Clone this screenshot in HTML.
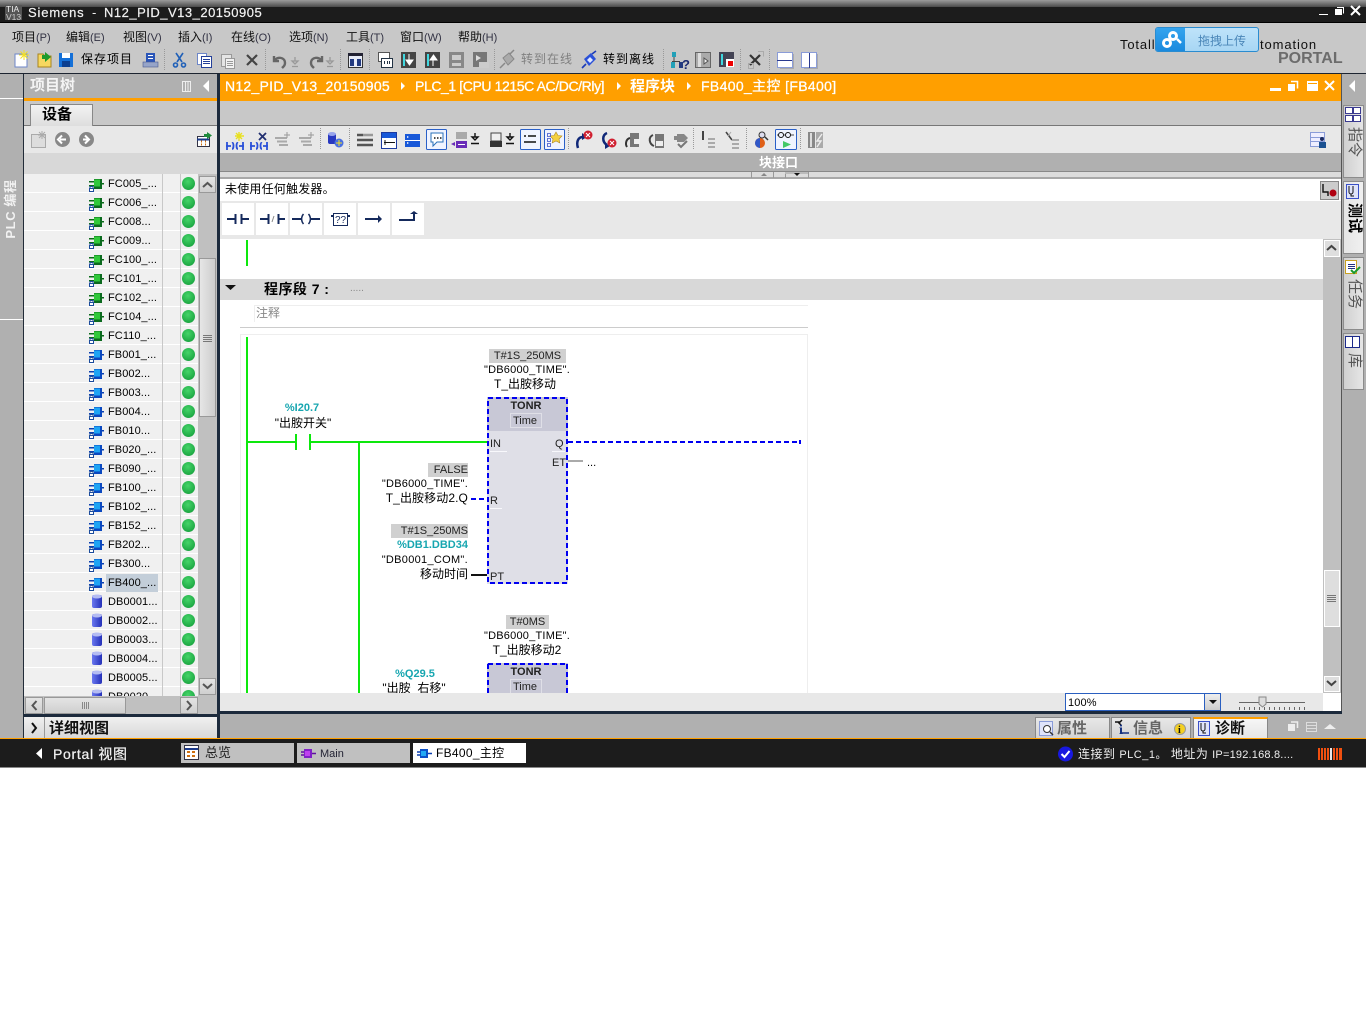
<!DOCTYPE html>
<html lang="zh"><head><meta charset="utf-8"><title>Siemens - N12_PID_V13_20150905</title>
<style>
html,body{margin:0;padding:0;background:#fff}
body{width:1366px;height:1016px;position:relative;overflow:hidden;font:11px "Liberation Sans","WenQuanYi Zen Hei","Noto Sans CJK SC",sans-serif;color:#000}
.b{position:absolute}
.t{position:absolute;white-space:nowrap;line-height:14px}
.m{font-size:12px;color:#111}.m i{font-style:normal;color:#334;font-size:11px}
.rt{text-align:right;right:898px}
.c{text-align:center}
.r{position:absolute;left:24px;width:174px;height:18px;background:#f0f0f0;border-bottom:1px solid #fff}
.r svg{position:absolute;left:64px;top:2px}
.r span{position:absolute;left:84px;top:3px;line-height:14px;white-space:nowrap;letter-spacing:.08px}
.r u{position:absolute;left:138px;top:0;width:1px;height:19px;background:#c8c8c8}
.r s{position:absolute;left:156px;top:0;width:1px;height:19px;background:#c8c8c8}
.r b{position:absolute;left:158px;top:3px;width:13px;height:13px;border-radius:50%;background:radial-gradient(circle at 45% 35%,#45d468,#1faa45 70%,#178a38)}
.sb{position:absolute;box-sizing:border-box;border:1px solid #fff;outline:1px solid #999;outline-offset:-1px;background:linear-gradient(#e4e4e4,#cfcfcf)}
.btn{position:absolute;background:#fff;width:32px;height:32px;top:203px}
.vt{position:absolute;box-sizing:border-box;left:1343px;width:21px;border:1px solid #8c8c8c;background:linear-gradient(90deg,#d0d0d0,#e6e6e6)}
.vt span{position:absolute;left:2px;writing-mode:vertical-rl;text-orientation:sideways;font-size:15px;line-height:16px;color:#555;white-space:nowrap}
.tab{position:absolute;top:743px;width:113px;height:20px;background:#c0c0c0}
.lt{position:absolute;top:717px;height:21px;box-sizing:border-box;border:1px solid #888;border-bottom:0;background:linear-gradient(#e8e8e8,#d4d4d4)}
</style></head><body>

<!-- Backgrounds -->
<div class="b" style="left:0;top:0;width:1366px;height:7px;background:linear-gradient(#9c9c9c,#4a4a4a)"></div>
<div class="b" style="left:0;top:7px;width:1366px;height:15px;background:#1c1c1c"></div>
<div class="b" style="left:0;top:22px;width:1366px;height:1px;background:#000"></div>
<div class="b" style="left:0;top:23px;width:1366px;height:50px;background:#c8c8c8"></div>
<div class="b" style="left:0;top:73px;width:1366px;height:1px;background:#1c2430"></div>

<!-- Left vertical strip -->
<div class="b" style="left:0;top:74px;width:23px;height:665px;background:#b0b0b0"></div>
<div class="b" style="left:0;top:98px;width:23px;height:1px;background:#fff"></div>
<div class="b" style="left:0;top:319px;width:23px;height:1px;background:#fff"></div>
<div class="b" style="left:23px;top:74px;width:1px;height:665px;background:#222c38"></div>
<div class="t" style="left:-24px;top:202px;width:70px;text-align:center;transform:rotate(-90deg);color:#f2f2f2;font-weight:bold;font-size:13px;letter-spacing:.6px">PLC 编程</div>

<!-- Project tree -->
<div class="b" style="left:24px;top:74px;width:193px;height:24px;background:#b0b0b0"></div>
<div class="b" style="left:24px;top:98px;width:193px;height:3px;background:#ff9f00"></div>
<div class="t" style="left:30px;top:78px;font-size:15px;line-height:16px;color:#f4f4f4;font-weight:bold">项目树</div>
<div class="b" style="left:24px;top:101px;width:193px;height:24px;background:#c8c8c8"></div>
<div class="b" style="left:24px;top:125px;width:193px;height:1px;background:#777"></div>
<div class="b" style="left:30px;top:104px;width:63px;height:22px;box-sizing:border-box;border:1px solid #888;border-bottom:0;background:linear-gradient(#f2f2f2,#dedede)"></div>
<div class="t" style="left:42px;top:106px;font-size:15px;line-height:17px;font-weight:bold">设备</div>
<div class="b" style="left:24px;top:126px;width:193px;height:27px;background:#e8e8e8"></div>
<div class="b" style="left:24px;top:153px;width:193px;height:21px;background:#d8d8d8"></div>
<div class="b" style="left:198px;top:174px;width:19px;height:522px;background:#c0c0c0"></div>

<svg width="0" height="0" style="position:absolute">
<defs>
<g id="fc"><path d="M1 5h5v1.500H1zM1 9h5v1.500H1zM13 7h3v1.500h-3z" fill="#0a6a18"/><rect x="6" y="3" width="8" height="10" fill="#0b6a1e"/><rect x="6" y="3.500" width="6" height="7" fill="#30c83a"/><rect x="1" y="12" width="5" height="4" fill="#1c4c9c"/><rect x="2" y="13" width="3" height="2" fill="#fff"/><path d="M2 12v-1.500h3V12" fill="none" stroke="#1c4c9c"/></g>
<g id="fb"><path d="M1 5h5v1.500H1zM1 9h5v1.500H1zM13 7h3v1.500h-3z" fill="#0a3fb0"/><rect x="6" y="3" width="8" height="10" fill="#0a48c0"/><rect x="6" y="3.500" width="6" height="7" fill="#1ea4f4"/><rect x="1" y="12" width="5" height="4" fill="#1c4c9c"/><rect x="2" y="13" width="3" height="2" fill="#fff"/><path d="M2 12v-1.500h3V12" fill="none" stroke="#1c4c9c"/></g>
<linearGradient id="dbg" x1="0" x2="1" y1="0" y2="0"><stop offset="0" stop-color="#6a78f0"/><stop offset="1" stop-color="#2430b8"/></linearGradient>
<g id="db"><rect x="4" y="1" width="10" height="13" rx="2" fill="url(#dbg)"/><ellipse cx="9" cy="2.500" rx="5" ry="2" fill="#b4bcf2"/></g>
</defs></svg>

<div class="r" style="top:174px"><svg width="18" height="16"><use href="#fc"/></svg><span>FC005_...</span><u></u><s></s><b></b></div>
<div class="r" style="top:193px"><svg width="18" height="16"><use href="#fc"/></svg><span>FC006_...</span><u></u><s></s><b></b></div>
<div class="r" style="top:212px"><svg width="18" height="16"><use href="#fc"/></svg><span>FC008...</span><u></u><s></s><b></b></div>
<div class="r" style="top:231px"><svg width="18" height="16"><use href="#fc"/></svg><span>FC009...</span><u></u><s></s><b></b></div>
<div class="r" style="top:250px"><svg width="18" height="16"><use href="#fc"/></svg><span>FC100_...</span><u></u><s></s><b></b></div>
<div class="r" style="top:269px"><svg width="18" height="16"><use href="#fc"/></svg><span>FC101_...</span><u></u><s></s><b></b></div>
<div class="r" style="top:288px"><svg width="18" height="16"><use href="#fc"/></svg><span>FC102_...</span><u></u><s></s><b></b></div>
<div class="r" style="top:307px"><svg width="18" height="16"><use href="#fc"/></svg><span>FC104_...</span><u></u><s></s><b></b></div>
<div class="r" style="top:326px"><svg width="18" height="16"><use href="#fc"/></svg><span>FC110_...</span><u></u><s></s><b></b></div>
<div class="r" style="top:345px"><svg width="18" height="16"><use href="#fb"/></svg><span>FB001_...</span><u></u><s></s><b></b></div>
<div class="r" style="top:364px"><svg width="18" height="16"><use href="#fb"/></svg><span>FB002...</span><u></u><s></s><b></b></div>
<div class="r" style="top:383px"><svg width="18" height="16"><use href="#fb"/></svg><span>FB003...</span><u></u><s></s><b></b></div>
<div class="r" style="top:402px"><svg width="18" height="16"><use href="#fb"/></svg><span>FB004...</span><u></u><s></s><b></b></div>
<div class="r" style="top:421px"><svg width="18" height="16"><use href="#fb"/></svg><span>FB010...</span><u></u><s></s><b></b></div>
<div class="r" style="top:440px"><svg width="18" height="16"><use href="#fb"/></svg><span>FB020_...</span><u></u><s></s><b></b></div>
<div class="r" style="top:459px"><svg width="18" height="16"><use href="#fb"/></svg><span>FB090_...</span><u></u><s></s><b></b></div>
<div class="r" style="top:478px"><svg width="18" height="16"><use href="#fb"/></svg><span>FB100_...</span><u></u><s></s><b></b></div>
<div class="r" style="top:497px"><svg width="18" height="16"><use href="#fb"/></svg><span>FB102_...</span><u></u><s></s><b></b></div>
<div class="r" style="top:516px"><svg width="18" height="16"><use href="#fb"/></svg><span>FB152_...</span><u></u><s></s><b></b></div>
<div class="r" style="top:535px"><svg width="18" height="16"><use href="#fb"/></svg><span>FB202...</span><u></u><s></s><b></b></div>
<div class="r" style="top:554px"><svg width="18" height="16"><use href="#fb"/></svg><span>FB300...</span><u></u><s></s><b></b></div>
<div class="r" style="top:573px"><div class="b" style="left:82px;top:1px;width:52px;height:18px;background:#c3ced9"></div><svg width="18" height="16"><use href="#fb"/></svg><span>FB400_...</span><u></u><s></s><b></b></div>
<div class="r" style="top:592px"><svg width="18" height="16"><use href="#db"/></svg><span>DB0001...</span><u></u><s></s><b></b></div>
<div class="r" style="top:611px"><svg width="18" height="16"><use href="#db"/></svg><span>DB0002...</span><u></u><s></s><b></b></div>
<div class="r" style="top:630px"><svg width="18" height="16"><use href="#db"/></svg><span>DB0003...</span><u></u><s></s><b></b></div>
<div class="r" style="top:649px"><svg width="18" height="16"><use href="#db"/></svg><span>DB0004...</span><u></u><s></s><b></b></div>
<div class="r" style="top:668px"><svg width="18" height="16"><use href="#db"/></svg><span>DB0005...</span><u></u><s></s><b></b></div>
<div class="r" style="top:687px;height:9px;overflow:hidden;border:0"><svg width="18" height="16"><use href="#db"/></svg><span>DB0020...</span><u></u><s></s><b></b></div>

<!-- Tree scrollbars -->
<div class="sb" style="left:199px;top:176px;width:17px;height:17px"></div>
<div class="sb" style="left:199px;top:258px;width:17px;height:159px;background:linear-gradient(90deg,#e6e6e6,#cdcdcd)"></div>
<div class="sb" style="left:199px;top:678px;width:17px;height:17px"></div>
<div class="b" style="left:24px;top:696px;width:193px;height:18px;background:#c0c0c0"></div>
<div class="sb" style="left:25px;top:697px;width:18px;height:17px"></div>
<div class="sb" style="left:44px;top:697px;width:82px;height:17px"></div>
<div class="sb" style="left:180px;top:697px;width:18px;height:17px"></div>
<div class="b" style="left:24px;top:714px;width:193px;height:3px;background:#1c2a3c"></div>
<div class="b" style="left:24px;top:717px;width:193px;height:21px;background:linear-gradient(#f0f0f0,#d8d8d8)"></div>
<div class="b" style="left:44px;top:717px;width:1px;height:21px;background:#999"></div>
<div class="t" style="left:49px;top:721px;font-size:15px;line-height:16px;font-weight:bold;color:#111">详细视图</div>
<div class="b" style="left:217px;top:74px;width:3px;height:665px;background:#1c2a3c"></div>

<!-- Editor -->
<div class="b" style="left:220px;top:74px;width:1122px;height:27px;background:#ff9f00"></div>
<div class="t" style="left:225px;top:78px;font-size:14px;line-height:17px;color:#fff;letter-spacing:.27px;-webkit-text-stroke:.3px #fff">N12_PID_V13_20150905</div>
<div class="t" style="left:415px;top:78px;font-size:14px;line-height:17px;color:#fff;letter-spacing:-.4px;-webkit-text-stroke:.3px #fff">PLC_1 [CPU 1215C AC/DC/Rly]</div>
<div class="t" style="left:630px;top:78px;font-size:15px;line-height:17px;color:#fff;font-weight:bold">程序块</div>
<div class="t" style="left:701px;top:78px;font-size:14px;line-height:17px;color:#fff;letter-spacing:.35px;-webkit-text-stroke:.3px #fff">FB400_主控 [FB400]</div>
<div class="b" style="left:220px;top:101px;width:1122px;height:24px;background:#c8c8c8"></div>
<div class="b" style="left:220px;top:125px;width:1122px;height:1px;background:#777"></div>
<div class="b" style="left:220px;top:126px;width:1122px;height:27px;background:#e8e8e8"></div>
<div class="b" style="left:220px;top:153px;width:1122px;height:18px;background:#b0b0b0"></div>
<div class="b" style="left:220px;top:171px;width:1122px;height:1px;background:#888"></div>
<div class="b" style="left:220px;top:172px;width:1122px;height:5px;background:#dcdcdc"></div>
<div class="b" style="left:220px;top:177px;width:1122px;height:2px;background:#a8a8a8"></div>
<div class="b" style="left:220px;top:179px;width:1122px;height:22px;background:#fff"></div>
<div class="b" style="left:220px;top:201px;width:1122px;height:38px;background:#e8e8e8"></div>
<div class="b" style="left:220px;top:239px;width:1103px;height:454px;background:#fff"></div>
<div class="b" style="left:1323px;top:239px;width:19px;height:454px;background:#c0c0c0"></div>
<div class="t" style="left:759px;top:155px;font-size:13px;line-height:15px;font-weight:bold;color:#fff">块接口</div>
<div class="t" style="left:225px;top:182px;font-size:12px;line-height:14px;letter-spacing:.2px">未使用任何触发器。</div>

<div class="btn" style="left:222px"></div><div class="btn" style="left:256px"></div><div class="btn" style="left:290px"></div>
<div class="btn" style="left:324px"></div><div class="btn" style="left:358px"></div><div class="btn" style="left:392px"></div>

<!-- Network header -->
<div class="b" style="left:220px;top:279px;width:1103px;height:21px;background:#d8d8d8"></div>
<div class="t" style="left:264px;top:281px;font-size:14px;line-height:16px;font-weight:bold;letter-spacing:.45px">程序段 7 :</div>
<div class="t" style="left:350px;top:283px;font-size:10px;line-height:12px;color:#888">.....</div>
<div class="b" style="left:254px;top:305px;width:554px;height:1px;background:#eee"></div>
<div class="b" style="left:254px;top:305px;width:1px;height:17px;background:#eee"></div>
<div class="t" style="left:256px;top:306px;font-size:12px;color:#888">注释</div>
<div class="b" style="left:240px;top:327px;width:568px;height:1px;background:#ccc"></div>
<div class="b" style="left:240px;top:334px;width:568px;height:1px;background:#eee"></div>
<div class="b" style="left:240px;top:334px;width:1px;height:359px;background:#eee"></div>
<div class="b" style="left:807px;top:334px;width:1px;height:359px;background:#eee"></div>

<!-- Ladder blocks -->
<div class="b" style="left:487px;top:397px;width:81px;height:34px;background:#c8c8d6"></div>
<div class="b" style="left:487px;top:431px;width:81px;height:153px;background:#dfdfe7"></div>
<div class="b" style="left:510px;top:413px;width:32px;height:15px;box-sizing:border-box;border:1px solid #dfdfe7"></div>
<div class="b" style="left:487px;top:663px;width:81px;height:30px;background:#c8c8d6"></div>
<div class="b" style="left:510px;top:679px;width:32px;height:14px;box-sizing:border-box;border:1px solid #dfdfe7;border-bottom:0"></div>

<!-- Right strip -->
<div class="b" style="left:1342px;top:74px;width:24px;height:665px;background:#b0b0b0"></div>
<div class="b" style="left:1341px;top:74px;width:1px;height:665px;background:#555"></div>
<div class="vt" style="top:105px;height:73px"><span style="top:21px">指令</span></div>
<div class="vt" style="top:181px;height:73px;background:linear-gradient(90deg,#e6e6e6,#f0f0f0)"><span style="top:21px;color:#000;font-weight:bold">测试</span></div>
<div class="vt" style="top:257px;height:73px"><span style="top:21px">任务</span></div>
<div class="vt" style="top:333px;height:57px"><span style="top:19px">库</span></div>

<!-- Bottom of editor -->
<div class="b" style="left:220px;top:693px;width:1103px;height:18px;background:#e8e8e8"></div>
<div class="b" style="left:1065px;top:693px;width:156px;height:18px;box-sizing:border-box;border:1px solid #2a5fc0;background:#fff"></div>
<div class="b" style="left:1204px;top:694px;width:16px;height:16px;background:linear-gradient(#eee,#ccc);border-left:1px solid #2a5fc0;box-sizing:border-box"></div>
<div class="t" style="left:1068px;top:696px;font-size:11px;letter-spacing:.15px">100%</div>
<div class="b" style="left:220px;top:711px;width:1122px;height:3px;background:#1c2a3c"></div>
<div class="b" style="left:220px;top:714px;width:1122px;height:24px;background:#b0b0b0"></div>
<div class="lt" style="left:1035px;width:75px"></div>
<div class="lt" style="left:1111px;width:80px"></div>
<div class="lt" style="left:1193px;width:75px;background:linear-gradient(#f6f6f6,#e6e6e6);border-top:2px solid #ff9f00"></div>
<div class="t" style="left:1057px;top:720px;font-size:15px;line-height:17px;font-weight:bold;color:#666">属性</div>
<div class="t" style="left:1133px;top:720px;font-size:15px;line-height:17px;font-weight:bold;color:#666">信息</div>
<div class="t" style="left:1215px;top:720px;font-size:15px;line-height:17px;font-weight:bold;color:#111">诊断</div>

<!-- Bottom bar -->
<div class="b" style="left:0;top:738px;width:1366px;height:1px;background:#ff9f00"></div>
<div class="b" style="left:0;top:739px;width:1366px;height:28px;background:#1c1c1c"></div>
<div class="b" style="left:0;top:767px;width:1366px;height:1px;background:#888"></div>
<div class="t" style="left:53px;top:746px;font-size:14px;line-height:17px;color:#f0f0f0;letter-spacing:.7px;-webkit-text-stroke:.25px #f0f0f0">Portal 视图</div>
<div class="tab" style="left:181px"></div><div class="tab" style="left:297px"></div><div class="tab" style="left:413px;background:#fff"></div>
<div class="t" style="left:205px;top:745px;font-size:13px;line-height:15px;color:#222">总览</div>
<div class="t" style="left:320px;top:747px;font-size:11px;color:#223">Main</div>
<div class="t" style="left:436px;top:746px;font-size:12px;line-height:15px;letter-spacing:.3px">FB400_主控</div>
<div class="t" style="left:1078px;top:747px;font-size:12px;color:#eee;letter-spacing:.5px">连接到 <span style="font-size:11px">PLC_1。</span> 地址为 <span style="font-size:11px;letter-spacing:.2px">IP=192.168.8....</span></div>

<!-- Title bar & menu -->
<div class="t" style="left:28px;top:5px;font-size:13px;line-height:15px;color:#f2f2f2;letter-spacing:.85px;-webkit-text-stroke:.2px #f2f2f2">Siemens</div>
<div class="t" style="left:92px;top:5px;font-size:13px;line-height:15px;color:#f2f2f2">-</div>
<div class="t" style="left:104px;top:5px;font-size:13px;line-height:15px;color:#f2f2f2;letter-spacing:.5px;-webkit-text-stroke:.2px #f2f2f2">N12_PID_V13_20150905</div>
<div class="t m" style="left:12px;top:30px">项目<i>(P)</i></div>
<div class="t m" style="left:66px;top:30px">编辑<i>(E)</i></div>
<div class="t m" style="left:123px;top:30px">视图<i>(V)</i></div>
<div class="t m" style="left:178px;top:30px">插入<i>(I)</i></div>
<div class="t m" style="left:231px;top:30px">在线<i>(O)</i></div>
<div class="t m" style="left:289px;top:30px">选项<i>(N)</i></div>
<div class="t m" style="left:346px;top:30px">工具<i>(T)</i></div>
<div class="t m" style="left:400px;top:30px">窗口<i>(W)</i></div>
<div class="t m" style="left:458px;top:30px">帮助<i>(H)</i></div>
<div class="t" style="left:81px;top:52px;font-size:12px;letter-spacing:1px">保存项目</div>
<div class="t" style="left:521px;top:52px;font-size:12px;letter-spacing:1px;color:#808080">转到在线</div>
<div class="t" style="left:603px;top:52px;font-size:12px;letter-spacing:1px">转到离线</div>
<div class="t" style="left:1120px;top:37px;font-size:13px;line-height:15px;letter-spacing:.85px;color:#111">Totall</div>
<div class="t" style="left:1260px;top:37px;font-size:13px;line-height:15px;letter-spacing:.9px;color:#111">tomation</div>
<div class="t" style="left:1278px;top:49px;font-size:16px;line-height:19px;font-weight:bold;color:#6c6c6c">PORTAL</div>
<div class="b" style="left:1155px;top:27px;width:104px;height:25px;box-sizing:border-box;border:1px solid #2a8cd0;border-radius:3px;background:linear-gradient(#bfe3fa,#a8d6f4)"></div>
<div class="b" style="left:1156px;top:28px;width:29px;height:23px;border-radius:2px 0 0 2px;background:linear-gradient(#34a4ee,#1a8ade)"></div>
<div class="t" style="left:1198px;top:34px;font-size:12px;color:#4a86b8">拖拽上传</div>

<!-- Ladder text -->
<div class="b" style="left:0;top:1px;width:1366px;height:692px;overflow:hidden">
<div class="t c" style="left:489px;top:348px;width:77px;background:#d0d0d0;font-size:11px;color:#222">T#1S_250MS</div>
<div class="t c" style="left:469px;top:362px;width:116px;font-size:11px;letter-spacing:.22px">"DB6000_TIME".</div>
<div class="t c" style="left:468px;top:376px;width:114px;font-size:12px">T_出胺移动</div>
<div class="t c" style="left:284px;top:400px;width:36px;font-size:11px;font-weight:bold;color:#17a6b0">%I20.7</div>
<div class="t c" style="left:264px;top:415px;width:78px;font-size:12px">"出胺开关"</div>
<div class="t c" style="left:486px;top:398px;width:80px;font-size:11px;font-weight:bold;color:#222">TONR</div>
<div class="t c" style="left:486px;top:413px;width:78px;font-size:11px;color:#222">Time</div>
<div class="t" style="left:490px;top:436px;font-size:11px;color:#222">IN</div>
<div class="t" style="left:555px;top:436px;font-size:11px;color:#222">Q</div>
<div class="t" style="left:552px;top:455px;font-size:11px;color:#222">ET</div>
<div class="t" style="left:587px;top:455px;font-size:11px">...</div>
<div class="t" style="left:490px;top:493px;font-size:11px;color:#222">R</div>
<div class="t" style="left:490px;top:569px;font-size:11px;color:#222">PT</div>
<div class="t" style="left:428px;top:462px;width:40px;background:#d0d0d0;text-align:right;font-size:11px;color:#222">FALSE</div>
<div class="t rt" style="top:476px;font-size:11px;letter-spacing:.22px">"DB6000_TIME".</div>
<div class="t rt" style="top:490px;font-size:12px;letter-spacing:.1px">T_出胺移动2.Q</div>
<div class="t" style="left:391px;top:523px;width:77px;background:#d0d0d0;text-align:right;font-size:11px;color:#222">T#1S_250MS</div>
<div class="t rt" style="top:537px;font-size:11px;font-weight:bold;color:#17a6b0">%DB1.DBD34</div>
<div class="t rt" style="top:552px;font-size:11px;letter-spacing:.3px">"DB0001_COM".</div>
<div class="t rt" style="top:566px;font-size:12px">移动时间</div>
<div class="t c" style="left:506px;top:614px;width:43px;background:#d0d0d0;font-size:11px;color:#222">T#0MS</div>
<div class="t c" style="left:469px;top:628px;width:116px;font-size:11px;letter-spacing:.22px">"DB6000_TIME".</div>
<div class="t c" style="left:470px;top:642px;width:114px;font-size:12px">T_出胺移动2</div>
<div class="t c" style="left:394px;top:666px;width:42px;font-size:11px;font-weight:bold;color:#17a6b0">%Q29.5</div>
<div class="t c" style="left:373px;top:680px;width:82px;font-size:12px">"出胺_右移"</div>
<div class="t c" style="left:486px;top:664px;width:80px;font-size:11px;font-weight:bold;color:#222">TONR</div>
<div class="t c" style="left:486px;top:679px;width:78px;font-size:11px;color:#222">Time</div>
</div>

<!-- Graphics overlay -->
<svg class="b" style="left:0;top:0;pointer-events:none" width="1366" height="768" viewBox="0 0 1366 768" fill="none">
<!-- App logo -->
<rect x="5" y="5" width="17" height="15" fill="#555"/>
<text x="6" y="12" fill="#eee" font-family="Liberation Sans" font-size="8.500">TIA</text>
<text x="6" y="20" fill="#ccc" font-family="Liberation Sans" font-size="8.500">V13</text>
<!-- Window buttons -->
<path d="M1319 14.500h9" stroke="#fff"/><path d="M1337 7.500h6.500v6" stroke="#fff"/><rect x="1335" y="9" width="7" height="6" fill="#fff"/><path d="M1351 6l9 9M1360 6l-9 9" stroke="#fff" stroke-width="2"/>
<!-- Toolbar 1 -->
<g><rect x="15" y="54" width="12" height="13" fill="#fff" stroke="#6d86c8"/><path d="M24 50v10M19 55h10M20.500 51.500l7 7M27.500 51.500l-7 7" stroke="#f4e020"/></g>
<g><path d="M38 54h5l2 2h6v11H38z" fill="#f6d860" stroke="#a88420"/><path d="M45 52l6 5-6 5v-3h-3v-4h3z" fill="#1e9a2c"/></g>
<g><rect x="59" y="53" width="14" height="14" fill="#1470d8"/><rect x="62" y="53" width="8" height="5" fill="#fff"/><rect x="62" y="61" width="8" height="6" fill="#0c3f90"/></g>
<g><rect x="146" y="53" width="9" height="9" fill="#2a55b8"/><rect x="148" y="55" width="5" height="1" fill="#fff"/><rect x="148" y="58" width="5" height="1" fill="#fff"/><rect x="143" y="62" width="15" height="5" fill="#96a4c8" stroke="#4a5a90" stroke-width=".6"/></g>
<path d="M164.500 49v21M265.500 49v21M340.500 49v21M369.500 49v21M494.500 49v21M663.500 49v21M740.500 49v21M769.500 49v21" stroke="#999" stroke-dasharray="1 1"/>
<g stroke="#2060b8" stroke-width="1.600"><path d="M176 53l6 9M183 53l-6 9"/><circle cx="175.500" cy="65" r="2"/><circle cx="183.500" cy="65" r="2"/></g>
<g><rect x="197.500" y="53.500" width="9" height="11" fill="#fff" stroke="#6d86c8"/><rect x="201.500" y="56.500" width="10" height="11" fill="#fff" stroke="#233f9a"/><path d="M203 59.500h7M203 61.500h7M203 63.500h7" stroke="#233f9a"/></g>
<g stroke="#999"><rect x="221.500" y="54.500" width="10" height="12" fill="#e4e4e4"/><rect x="225.500" y="58.500" width="9" height="10" fill="#f2f2f2"/><path d="M227 61.500h6M227 63.500h6M227 65.500h6"/></g>
<path d="M247 55l10 10M257 55l-10 10" stroke="#444" stroke-width="2.200"/>
<path d="M274 56v5h5M274 61c3-5 11-4 11 2 0 3-2 4-3 5" stroke="#666" stroke-width="2.400"/><path d="M295 57v4M292 61h6l-3 3zM292 66.500h6" stroke="#999" stroke-width="1.300"/>
<path d="M322 56v5h-5M322 61c-3-5-11-4-11 2 0 3 2 4 3 5" stroke="#666" stroke-width="2.400"/><path d="M330 57v4M327 61h6l-3 3zM327 66.500h6" stroke="#999" stroke-width="1.300"/>
<g><rect x="348.500" y="53.500" width="14" height="14" fill="#e8ecf8" stroke="#333"/><rect x="348" y="53" width="15" height="3" fill="#223"/><rect x="350" y="59" width="4" height="7" fill="#223a80"/><rect x="357" y="59" width="4" height="7" fill="#223a80"/></g>
<g><rect x="378.500" y="52.500" width="11" height="9" fill="#fff" stroke="#555"/><rect x="381.500" y="58.500" width="11" height="9" fill="#fff" stroke="#234"/><path d="M384.500 61v3M387.500 61v3M389.500 61v3" stroke="#234"/></g>
<g><rect x="401" y="52" width="15" height="16" fill="#444"/><rect x="403" y="54" width="2" height="12" fill="#40d8e0"/><path d="M409 54v7M406 60h7l-3.500 5z" fill="#fff" stroke="#fff"/></g>
<g><rect x="425" y="52" width="15" height="16" fill="#444"/><rect x="427" y="54" width="2" height="12" fill="#40d8e0"/><path d="M433 66v-7M430 60h7l-3.500-5z" fill="#fff" stroke="#fff"/></g>
<g><rect x="449" y="52" width="15" height="16" fill="#888"/><rect x="452" y="55" width="9" height="5" fill="#ccc"/><rect x="452" y="63" width="9" height="3" fill="#ccc"/></g>
<g><rect x="473" y="52" width="14" height="15" fill="#777"/><path d="M476 55l5 3-5 3z" fill="#ddd"/><rect x="479" y="62" width="10" height="6" fill="#ccc"/></g>
<g stroke="#888"><path d="M500 68l5-5M509 55l5-5" stroke-width="1.500"/><path d="M503 58l6-5 5 6-6 6z" fill="#aaa"/></g>
<g><path d="M582 68l4-4M592 54l4-3" stroke="#1a3ab8" stroke-width="1.600"/><path d="M584 59l7-6 5 6-7 7z" fill="#2a50d8"/><path d="M587 60l3-3 3 3-3 3z" fill="#dfe8ff"/></g>
<g><rect x="672" y="52" width="4" height="5" fill="#22a0b8"/><path d="M674 57v4M672 61.500h8" stroke="#444"/><rect x="671" y="62" width="4" height="6" fill="#22a0b8"/><rect x="679" y="62" width="4" height="6" fill="#223a80"/></g>
<text x="682" y="69" fill="#1a2a70" font-family="Liberation Sans" font-weight="bold" font-size="13">?</text>
<g><rect x="695.500" y="52.500" width="15" height="15" fill="#aaa" stroke="#666"/><rect x="698" y="53" width="3" height="14" fill="#ddd"/><path d="M704 58l4 3-4 3z" fill="#eee" stroke="#555"/></g>
<g><rect x="719" y="52" width="15" height="15" fill="#445"/><rect x="721" y="54" width="2" height="11" fill="#40d8e0"/><rect x="726" y="59" width="8" height="8" fill="#fff"/><rect x="728" y="61" width="5" height="5" fill="#e00"/></g>
<g><path d="M750 55l10 10M760 55l-10 10" stroke="#333" stroke-width="2.200"/><path d="M758 51.500h5.500v5" stroke="#aaa"/><rect x="748.500" y="63.500" width="5" height="5" stroke="#aaa"/></g>
<g><rect x="777.500" y="52.500" width="15" height="15" fill="#fff" stroke="#8a9cd8"/><path d="M777 60.500h15" stroke="#2a3a90"/><path d="M793.500 54v14.500H780" stroke="#aaa"/></g>
<g><rect x="801.500" y="52.500" width="15" height="15" fill="#fff" stroke="#8a9cd8"/><path d="M809.500 53v15" stroke="#2a3a90"/><path d="M817.500 54v14.500H804" stroke="#aaa"/></g>
<!-- Orange bar glyphs -->
<path d="M182.500 81.500h8v10h-8zM185.500 81v10M188 81v10" stroke="#eee"/><path d="M209 80v12l-6-6z" fill="#fff"/>
<path d="M401 82l4 4-4 4zM617 82l4 4-4 4zM687 82l4 4-4 4z" fill="#fff"/>
<path d="M1270 89.500h11" stroke="#fff" stroke-width="3"/>
<rect x="1288" y="84" width="7" height="7" fill="#fff"/><path d="M1291 81.500h6.500v7" stroke="#fff" stroke-width="1.500"/>
<rect x="1307" y="81" width="11" height="10" fill="#fff"/><rect x="1308" y="83" width="9" height="1" fill="#ff9f00"/>
<path d="M1325 81l9 9M1334 81l-9 9" stroke="#fff" stroke-width="2"/>
<!-- Toolbar 2 -->
<g stroke="#2a50d8" stroke-width="1.800"><path d="M227 142v8M226 146h5M243 142v8M244 146h-5M232 143c2-1 2 6 0 6M238 143c-2-1-2 6 0 6"/><path d="M251 142v8M250 146h5M267 142v8M268 146h-5M256 143c2-1 2 6 0 6M262 143c-2-1-2 6 0 6"/></g>
<path d="M239 132v9M235 136h9M236 133l6 6M242 133l-6 6" stroke="#e8e020" stroke-width="1.400"/>
<path d="M259 133l7 7M266 133l-7 7" stroke="#223070" stroke-width="1.800"/>
<g stroke="#aaa" stroke-width="2"><path d="M275 138h12M277 141.500h10M279 145h9M299 138h12M301 141.500h10M303 145h9"/></g><path d="M287 132v6M284 135h6M311 132v6M308 135h6" stroke="#999"/>
<path d="M320.500 128v22M349.500 128v22M568.500 128v22M693.500 128v22M746.500 128v22M800.500 128v22" stroke="#999" stroke-dasharray="1 1"/>
<g><rect x="328" y="133" width="8" height="11" rx="2" fill="#2838c0"/><ellipse cx="332" cy="134" rx="4" ry="2" fill="#98a4ec"/><circle cx="339" cy="143" r="4.500" fill="#4a70e0"/><path d="M339 140v6M336 143h6" stroke="#f4e020"/></g>
<g stroke="#555" stroke-width="2.500"><path d="M357 135h6M357 140h16M357 145h16"/></g><path d="M363 135h10" stroke="#999" stroke-width="2.500"/>
<g><rect x="381.500" y="132.500" width="15" height="16" fill="#fff" stroke="#1c3aa0"/><rect x="382" y="133" width="14" height="5" fill="#1858d8"/><path d="M384 142.500h11M385 140v5" stroke="#111"/></g>
<g><rect x="405" y="134" width="15" height="13" fill="#1858d8"/><path d="M405 140.500h15" stroke="#fff"/><path d="M407 136l2 1-2 1zM407 142l2 1-2 1z" fill="#fff"/></g>
<rect x="426.500" y="129.500" width="20" height="20" rx="1" fill="#f0f4ff" stroke="#2a60c8"/>
<path d="M431 133h12v9h-6l-4 4v-4h-2z" fill="#fff" stroke="#2a70b8"/><path d="M434 138h1.500M437 138h1.500M440 138h1.500" stroke="#111" stroke-width="1.400"/>
<g><rect x="456" y="132" width="11" height="7" fill="#aaa"/><rect x="456" y="141" width="11" height="7" fill="#6a2cb8"/><path d="M451 144l4-2v4z" fill="#6a2cb8"/><path d="M458 144.500h7" stroke="#fff"/><path d="M475 133v4M472 137h6l-3 3zM471 143.500h8" stroke="#111" stroke-width="1.400"/></g>
<g><path d="M491 133h10v8h-10z" fill="#eee" stroke="#444"/><rect x="490" y="141" width="12" height="6" fill="#333"/><path d="M510 133v4M507 137h6l-3 3zM506 143.500h8" stroke="#111" stroke-width="1.400"/></g>
<rect x="520.500" y="129.500" width="20" height="20" rx="1" fill="#f0f4ff" stroke="#2a60c8"/>
<path d="M524 136h2M524 142h2M528 136h8M526 142h10" stroke="#111" stroke-width="1.500"/>
<rect x="544.500" y="129.500" width="20" height="20" rx="1" fill="#f0f4ff" stroke="#2a60c8"/>
<path d="M556 132l2 3.500 4 .500-3 3 .8 4-3.800-2-3.800 2 .8-4-3-3 4-.500z" fill="#f4d040" stroke="#b08820" stroke-width=".6"/><path d="M547.500 133.500h3v3h-3zM547.500 138.500h3v3h-3zM547.500 143.500h3v3h-3z" stroke="#3a50c8" stroke-width=".8"/>
<g><path d="M578 148c-2-6 0-11 5-11" stroke="#102878" stroke-width="2.500"/><path d="M582 133l5 4-5 3z" fill="#102878"/><circle cx="588" cy="135" r="4.500" fill="#d02030"/><path d="M586 133l4 4M590 133l-4 4" stroke="#fff"/></g>
<g><path d="M607 133c-5 2-5 9 0 12" stroke="#102878" stroke-width="2.500"/><path d="M605 143l5 3-5 3z" fill="#102878"/><circle cx="612" cy="143" r="4.500" fill="#d02030"/><path d="M610 141l4 4M614 141l-4 4" stroke="#fff"/></g>
<g><rect x="630" y="133" width="9" height="14" fill="#777"/><rect x="634" y="139" width="6" height="5" fill="#eee"/><path d="M627 147c-2-3-1-8 3-9" stroke="#333" stroke-width="2"/></g>
<g><rect x="655" y="134" width="9" height="14" fill="#777"/><rect x="656" y="141" width="7" height="5" fill="#eee"/><path d="M654 146c-5-2-6-9-1-11" stroke="#444" stroke-width="2"/></g>
<g><path d="M674 136h3v-2h7l4 4-4 4h-7v-2h-3z" fill="#888"/><path d="M678 144l3 3 6-6" stroke="#777" stroke-width="2"/></g>
<g><rect x="702" y="131" width="2" height="9" fill="#444"/><path d="M708 139h7M708 143h7M708 147h7" stroke="#aaa" stroke-width="2"/></g>
<g><path d="M726 132l6 8" stroke="#444" stroke-width="1.600"/><path d="M731 132l-3 4" stroke="#aaa"/><path d="M732 140h7M732 144h7M732 148h7" stroke="#aaa" stroke-width="2"/></g>
<g><circle cx="760" cy="143" r="5" fill="#e06018"/><path d="M760 138a5 5 0 000 10z" fill="#3058c8"/><circle cx="762" cy="135" r="3" fill="#dde" stroke="#333"/><path d="M765 137l3 3" stroke="#333" stroke-width="1.500"/></g>
<rect x="775.500" y="129.500" width="21" height="20" rx="1" fill="#f0f4ff" stroke="#2a60c8"/>
<circle cx="781" cy="135" r="2.500" stroke="#111"/><circle cx="788" cy="135" r="2.500" stroke="#111"/><path d="M778 135h-1M784 135h1M791 135h3" stroke="#111" stroke-width=".7"/><path d="M783 141l8 3.500-8 3.500z" fill="#44c868"/>
<g><rect x="808" y="132" width="7" height="16" fill="#888"/><rect x="810" y="133" width="2" height="14" fill="#ddd"/><rect x="816" y="132" width="7" height="16" fill="#aaa"/><path d="M822 134l-5 7 4 0-4 6" stroke="#eee" stroke-width="1.400"/></g>
<g><rect x="1310.500" y="132.500" width="14" height="14" fill="#eef" stroke="#8a9cd8"/><path d="M1311 137.500h13M1311 141.500h13" stroke="#8a9cd8"/><circle cx="1322" cy="139" r="2" fill="#1a2a60"/><rect x="1319" y="142" width="7" height="6" fill="#1a5090"/></g>
<!-- interface splitter -->
<path d="M751.500 172v6M773.500 172v6M785.500 172v6M808.500 172v6" stroke="#999"/><rect x="785" y="172" width="23" height="2" fill="#bbb"/><path d="M761 176l3-3 3 3z" fill="#888"/><path d="M794 173h6l-3 3z" fill="#111"/>
<!-- Project tree toolbar -->
<g><rect x="31.500" y="134.500" width="14" height="13" fill="#ddd" stroke="#aaa"/><path d="M42 131v8M38 135h8M39 132l6 6M45 132l-6 6" stroke="#aaa"/></g>
<circle cx="62.500" cy="139.500" r="7.500" fill="#888"/><path d="M66 139.500h-6M62 135.500l-4 4 4 4" stroke="#fff" stroke-width="2"/>
<circle cx="86.500" cy="139.500" r="7.500" fill="#888"/><path d="M83 139.500h6M85 135.500l4 4-4 4" stroke="#fff" stroke-width="2"/>
<g><rect x="197.500" y="136.500" width="12" height="10" fill="#fff" stroke="#334"/><path d="M197 139.500h12" stroke="#1a3a8a" stroke-width="2"/><path d="M201 141.500h1M205 141.500h1M201 144.500h1M205 144.500h1" stroke="#d07010" stroke-width="2"/><path d="M204 134h3v-2l5 3.500-5 3.500v-2h-3z" fill="#1e8a3c"/></g>
<!-- Scroll arrows -->
<g stroke="#555" stroke-width="2"><path d="M203 187l4.500-4 4.500 4M203 684l4.500 4 4.500-4M36.500 701l-4 4.500 4 4.500M187 701l4 4.500-4 4.500"/></g>
<path d="M82.500 702v7M84.500 702v7M86.500 702v7M88.500 702v7" stroke="#888"/>
<path d="M203 335.500h9M203 337.500h9M203 339.500h9M203 341.500h9" stroke="#777"/>
<!-- editor scrollbar -->
<rect x="1324.500" y="240.500" width="15" height="16" fill="#dedede" stroke="#fff"/><path d="M1327 250l4.500-4 4.500 4" stroke="#444" stroke-width="2"/>
<rect x="1324.500" y="570.500" width="15" height="56" fill="#dedede" stroke="#fff"/><path d="M1327 595.500h9M1327 597.500h9M1327 599.500h9M1327 601.500h9" stroke="#777"/>
<rect x="1324.500" y="676.500" width="15" height="15" fill="#dedede" stroke="#fff"/><path d="M1327 681l4.500 4 4.500-4" stroke="#444" stroke-width="2"/>
<!-- breakpoint icon -->
<rect x="1320.500" y="181.500" width="18" height="18" fill="#ccc" stroke="#888"/><path d="M1323 184v8h5v4" stroke="#111" stroke-width="1.400"/><circle cx="1333" cy="193" r="3.500" fill="#b00010"/>
<!-- LAD toolbar icons -->
<g stroke="#152a5c" stroke-width="2"><path d="M227 219h8M235.500 214v10M241.500 214v10M241 219h8"/><path d="M260 219h8M268.500 214v10M278.500 214v10M278 219h7"/><path d="M292 219h10M310 219h10"/><path d="M365 219h13"/><path d="M399 220h15v-6"/></g>
<path d="M303.500 214c-2.500 3-2.500 7 0 10M308.500 214c2.500 3 2.500 7 0 10" stroke="#152a5c" stroke-width="1.500"/>
<path d="M272 222l2-6" stroke="#888"/><path d="M378 215l4 4-4 4z" fill="#152a5c"/><path d="M410 214l4-3 4 3z" fill="#152a5c"/>
<rect x="333.500" y="213.500" width="14" height="12" stroke="#152a5c"/><path d="M331 216h2M348 216h2" stroke="#152a5c" stroke-width="2"/>
<text x="335" y="223" fill="#152a5c" font-family="Liberation Sans" font-size="10">??</text>
<!-- Ladder -->
<path d="M225 285h11l-5.500 5z" fill="#111"/>
<g stroke="#0de80d" stroke-width="2"><path d="M247 240v26M247 337v356M247 442h49M311 442h176M359 442v251"/><path d="M296 434v16M310 434v16"/></g>
<g stroke="#0000f0" stroke-width="2" stroke-dasharray="5 3"><rect x="488" y="398" width="79" height="185"/><path d="M488 664v29M567 693v-30M488 664h79M568 442h232M471 499h16"/></g>
<rect x="799" y="440" width="2" height="4" fill="#0000f0"/>
<path d="M568 461h15" stroke="#aaa" stroke-width="2"/>
<path d="M471 575h16" stroke="#111" stroke-width="2"/>
<g stroke="#f8f8fc"><path d="M490 451.500h17M552 451.500h13M490 508.500h12"/></g>
<!-- Zoom combo & slider -->
<path d="M1209 700h8l-4 4z" fill="#111"/>
<path d="M1239 702.500h66" stroke="#666"/><path d="M1239.500 707v3M1244.500 707v3M1249.500 707v3M1254.500 707v3M1259.500 707v3M1264.500 707v3M1269.500 707v3M1274.500 707v3M1279.500 707v3M1284.500 707v3M1289.500 707v3M1294.500 707v3M1299.500 707v3M1304.500 707v3" stroke="#666"/><path d="M1259 697h7v7l-3.500 3-3.500-3z" fill="#ddd" stroke="#888"/>
<!-- Right strip icons -->
<g stroke="#3a3a90"><rect x="1345.500" y="107.500" width="7" height="6" fill="#fff"/><rect x="1353.500" y="107.500" width="7" height="6" fill="#fff"/><rect x="1345.500" y="115.500" width="7" height="6" fill="#fff"/><rect x="1353.500" y="115.500" width="7" height="6" fill="#fff"/></g>
<rect x="1346.500" y="184.500" width="12" height="14" fill="#dfe4fa" stroke="#3a50c8"/><path d="M1349 186v6a2 2 0 004 0v-6M1351 194v2h3" stroke="#111"/>
<rect x="1345.500" y="260.500" width="11" height="13" fill="#fff" stroke="#c8a020"/><path d="M1348 264.500h7M1348 266.500h7M1348 268.500h7" stroke="#223080"/><path d="M1351 270l3 3 6-6" stroke="#1a9a2c" stroke-width="2"/>
<path d="M1345.500 336.500h7v11h-7zM1352.500 336.500h7v11h-7z" fill="#fff" stroke="#1c2a8a"/>
<path d="M1355 80v12l-6-6z" fill="#fff"/>
<!-- Lower tabs icons -->
<rect x="1039.500" y="721.500" width="13" height="14" fill="#dfe4fa" stroke="#8a9cd8"/><circle cx="1047" cy="729" r="3.500" fill="#fff" stroke="#333"/><path d="M1050 732l3 3" stroke="#333" stroke-width="1.500"/>
<path d="M1115 722h5l2-2M1118 722l3 3" stroke="#111" stroke-width="1.500"/><text x="1119" y="734" fill="#143080" font-family="Liberation Serif" font-weight="bold" font-size="14">i</text><path d="M1122 733h7" stroke="#143080" stroke-width="1.500"/>
<circle cx="1180" cy="729" r="5.500" fill="#f4d020" stroke="#999"/><text x="1178" y="733" fill="#111" font-family="Liberation Serif" font-weight="bold" font-size="10">i</text>
<rect x="1198.500" y="721.500" width="11" height="14" fill="#dfe4fa" stroke="#3a50c8"/><path d="M1201 723v6a2 2 0 004 0v-6M1203 731v2h3" stroke="#111"/>
<rect x="1288" y="724" width="7" height="7" fill="#eee"/><path d="M1291 722h6.500v6" stroke="#eee" stroke-width="1.500"/>
<g stroke="#ddd"><rect x="1306.500" y="722.500" width="10" height="9"/><path d="M1306 725.500h11M1306 728.500h11"/></g>
<path d="M1324 729l6-5 6 5z" fill="#eee"/>
<path d="M32 723l4 5-4 5" stroke="#111" stroke-width="2"/>
<!-- Bottom bar icons -->
<path d="M42 748v11l-6-5.500z" fill="#fff"/>
<g><rect x="184.500" y="745.500" width="14" height="14" fill="#fff" stroke="#334"/><path d="M185 749h13" stroke="#1c3a8a" stroke-width="2"/><path d="M187 752h3M192 752h3M187 756h3M192 756h3" stroke="#d07010" stroke-width="2"/></g>
<g><rect x="304" y="749" width="8" height="9" fill="#8020c8"/><rect x="305" y="751" width="5" height="5" fill="#c040f0"/><path d="M301 752h3M301 755h3M312 753.500h4" stroke="#6010a0" stroke-width="1.400"/></g>
<g><rect x="420" y="749" width="8" height="9" fill="#0a50c8"/><rect x="421" y="751" width="5" height="5" fill="#22a8f4"/><path d="M417 752h3M417 755h3M428 753.500h4" stroke="#0a3fb0" stroke-width="1.400"/></g>
<circle cx="1065.500" cy="754" r="7.500" fill="#1818e0"/><path d="M1061.500 754l3 3 5-6" stroke="#fff" stroke-width="2"/>
<g fill="#f05010"><rect x="1318" y="748" width="2" height="12"/><rect x="1321" y="748" width="2" height="12"/><rect x="1324" y="748" width="2" height="12"/><rect x="1327" y="748" width="2" height="12"/><rect x="1333" y="748" width="2" height="12"/><rect x="1336" y="748" width="2" height="12"/><rect x="1339" y="748" width="3" height="12"/></g>
<rect x="1330" y="748" width="2" height="12" fill="#e8e8e8"/>
<!-- Upload widget icon -->
<g stroke="#fff" stroke-width="3"><circle cx="1167" cy="43" r="3.500"/><circle cx="1173" cy="36" r="3.500"/></g><path d="M1177 39l4 4" stroke="#fff" stroke-width="2.500"/>
</svg>
</body></html>
